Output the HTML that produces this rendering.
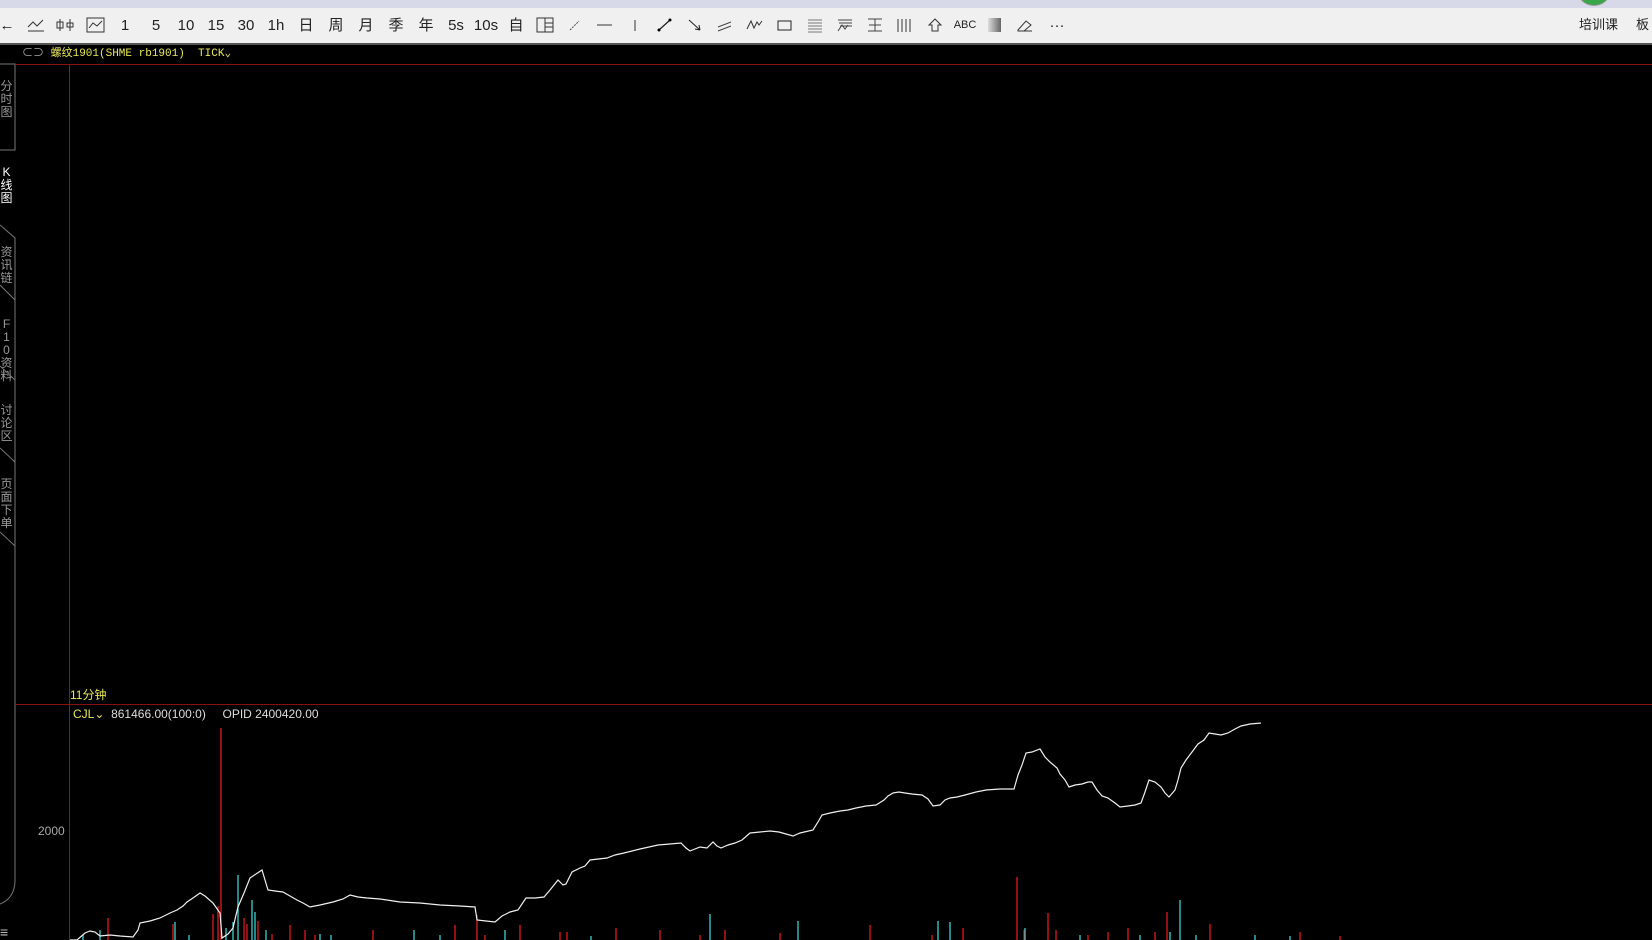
<!DOCTYPE html>
<html><head><meta charset="utf-8"><style>
html,body{margin:0;padding:0;width:1652px;height:940px;overflow:hidden;background:#000;font-family:"Liberation Sans","Noto Sans CJK SC",sans-serif;}
#title{position:absolute;left:0;top:0;width:1652px;height:8px;background:#d7d8e8;overflow:hidden}
#tb{position:absolute;left:0;top:8px;width:1652px;height:35px;background:#f0f0f0;border-bottom:2px solid #555;}
.ti{position:absolute;top:0;height:35px;line-height:35px;font-size:15px;color:#222;text-align:center;width:26px;margin-left:-13px;font-family:"Liberation Sans","Noto Sans CJK SC",sans-serif}
.ti svg{position:absolute;left:3px;top:9px}
.side{position:absolute;left:0;width:13px;font-size:12px;line-height:13px;color:#9a9a9a;text-align:center;font-family:"Liberation Sans","Noto Sans CJK SC",sans-serif}
</style></head><body>
<div id="title"><div style="position:absolute;left:1578px;top:-22px;width:30px;height:26px;border-radius:50%;background:#3aa64a;border:1px solid #999"></div></div>
<div id="tb">
<div class="ti" style="left:7px">←</div>
<div class="ti" style="left:36px"><svg width="20" height="16"><path d="M2 10 L7 5 L11 9 L17 3 M2 14 H18" stroke="#333" fill="none"/></svg></div>
<div class="ti" style="left:66px"><svg width="20" height="16"><path d="M4 2V14M1 5H7V11H1Z M14 2V14M11 6H17V10H11Z" stroke="#333" fill="none"/></svg></div>
<div class="ti" style="left:96px"><svg width="20" height="16"><rect x="1" y="1" width="17" height="14" stroke="#333" fill="none"/><path d="M3 11 L7 6 L11 9 L16 4" stroke="#333" fill="none"/></svg></div>
<div class="ti" style="left:125px">1</div>
<div class="ti" style="left:156px">5</div>
<div class="ti" style="left:186px">10</div>
<div class="ti" style="left:216px">15</div>
<div class="ti" style="left:246px">30</div>
<div class="ti" style="left:276px">1h</div>
<div class="ti" style="left:306px">日</div>
<div class="ti" style="left:336px">周</div>
<div class="ti" style="left:366px">月</div>
<div class="ti" style="left:396px">季</div>
<div class="ti" style="left:426px">年</div>
<div class="ti" style="left:456px">5s</div>
<div class="ti" style="left:486px">10s</div>
<div class="ti" style="left:516px">自</div>
<div class="ti" style="left:546px"><svg width="20" height="16"><rect x="1" y="1" width="16" height="14" stroke="#333" fill="none"/><path d="M9 1V15M9 6H17M9 10H17" stroke="#333"/></svg></div>
<div class="ti" style="left:575px"><svg width="20" height="16"><path d="M5 13L14 4" stroke="#555" stroke-dasharray="2 1"/></svg></div>
<div class="ti" style="left:605px"><svg width="20" height="16"><path d="M2 8H17" stroke="#333"/></svg></div>
<div class="ti" style="left:635px"><svg width="20" height="16"><path d="M10 3V14" stroke="#333"/></svg></div>
<div class="ti" style="left:665px"><svg width="20" height="16"><path d="M4 13L15 3" stroke="#222" stroke-width="1.3"/><circle cx="4" cy="13" r="1.5"/><circle cx="15" cy="3" r="1.5"/></svg></div>
<div class="ti" style="left:695px"><svg width="20" height="16"><path d="M4 3L15 13M15 13L10 12M15 13L14 8" stroke="#222" fill="none"/></svg></div>
<div class="ti" style="left:725px"><svg width="20" height="16"><path d="M3 10L16 5M3 14L16 9" stroke="#444"/></svg></div>
<div class="ti" style="left:755px"><svg width="20" height="16"><path d="M2 12L6 4L9 11L12 5L14 8L17 4" stroke="#333" fill="none"/></svg></div>
<div class="ti" style="left:785px"><svg width="20" height="16"><rect x="3" y="4" width="13" height="9" stroke="#222" fill="none"/></svg></div>
<div class="ti" style="left:815px"><svg width="20" height="16"><path d="M3 3H17M3 6H17M3 9H17M3 12H17M3 15H17" stroke="#777"/></svg></div>
<div class="ti" style="left:845px"><svg width="20" height="16"><path d="M3 3H17M4 6H17M5 9H17M3 14L7 8L10 12L13 8" stroke="#444" fill="none"/></svg></div>
<div class="ti" style="left:875px"><svg width="20" height="16"><path d="M3 2H17M3 14H17M10 2V14M4 8H16" stroke="#444"/></svg></div>
<div class="ti" style="left:905px"><svg width="20" height="16"><path d="M3 2V15M7 2V15M11 2V15M15 2V15" stroke="#333"/></svg></div>
<div class="ti" style="left:935px"><svg width="20" height="16"><path d="M10 2L4 8H7V14H13V8H16Z" stroke="#333" fill="none"/></svg></div>
<div class="ti" style="left:965px;font-size:11px">ABC</div>
<div class="ti" style="left:995px"><svg width="20" height="16"><defs><linearGradient id="g"><stop offset="0" stop-color="#ddd"/><stop offset="1" stop-color="#666"/></linearGradient></defs><rect x="3" y="1" width="13" height="14" fill="url(#g)"/></svg></div>
<div class="ti" style="left:1025px"><svg width="20" height="16"><path d="M3 13L11 4L16 8L9 14H3Z M3 14H17" stroke="#333" fill="none"/></svg></div>
<div class="ti" style="left:1057px">···</div>
<div style="position:absolute;left:1579px;top:0;line-height:33px;font-size:13px;color:#222">培训课</div>
<div style="position:absolute;left:1636px;top:0;line-height:33px;font-size:13px;color:#222">板</div>
</div>

<div style="position:absolute;left:22px;top:46px;font-family:'Liberation Mono','Noto Sans CJK SC',monospace;font-size:11px;color:#e8e85a;white-space:pre;line-height:16px"><span style="color:#aaa">⊂⊃</span> 螺纹1901(SHME rb1901)  TICK<span>⌄</span></div>
<div style="position:absolute;left:70px;top:686px;font-size:12px;color:#e8e85a">11分钟</div>
<div style="position:absolute;left:73px;top:707px;font-size:12px;color:#ddd;white-space:pre"><span style="color:#e8e85a">CJL⌄</span>  861466.00(100:0)     OPID 2400420.00</div>
<div style="position:absolute;left:38px;top:824px;font-size:12px;color:#aaa">2000</div>

<div class="side" style="top:80px">分<br>时<br>图</div>
<div class="side" style="top:166px;color:#fff">K<br>线<br>图</div>
<div class="side" style="top:246px">资<br>讯<br>链</div>
<div class="side" style="top:318px">F<br>1<br>0<br>资<br>料</div>
<div class="side" style="top:404px">讨<br>论<br>区</div>
<div class="side" style="top:478px">页<br>面<br>下<br>单</div>
<div style="position:absolute;left:0;top:924px;font-size:14px;color:#bbb">≡</div>

<svg width="1652" height="940" style="position:absolute;left:0;top:0" xmlns="http://www.w3.org/2000/svg">
<g stroke="#777" fill="none" stroke-width="1">
<path d="M0 64H15V150H0"/>
<path d="M0 225L15 238V300L0 285"/>
<path d="M15 300V380L0 366"/>
<path d="M15 380V462L0 448"/>
<path d="M15 462V546L0 532"/>
<path d="M15 546V880Q15 898 0 904"/>
</g>
<path d="M16 64.5H1652M16 704.5H1652" stroke="#8a1010"/>
<path d="M69.5 64V940" stroke="#9a1515"/>
<g stroke="#e01818" stroke-width="1.3">
<path d="M221 728V940M108 918V940M173 924V940M213 914V940M218 906V940M244 918V940M247 924V940M258 921V940M272 934V940M290 925V940M305 930V940M315 935V940M373 930V940M455 925V940M477 915V940M485 935V940M520 925V940M560 932V940M567 932V940M616 928V940M660 930V940M700 935V940M725 930V940M780 933V940M870 925V940M932 935V940M963 928V940M1017 877V940M1024 930V940M1048 913V940M1056 930V940M1088 935V940M1108 932V940M1128 928V940M1155 932V940M1167 912V940M1210 924V940M1300 932V940M1340 936V940"/>
</g>
<g stroke="#3cd0d0" stroke-width="1.3">
<path d="M238 875V940M226 928V940M233 922V940M252 900V940M83 935V940M100 930V940M175 922V940M189 935V940M255 912V940M266 930V940M320 934V940M331 935V940M414 930V940M440 935V940M505 930V940M591 936V940M710 914V940M798 921V940M938 921V940M950 922V940M1025 928V940M1080 935V940M1140 935V940M1180 900V940M1170 932V940M1196 935V940M1255 935V940M1290 936V940"/>
</g>
<polyline fill="none" stroke="#f0f0f0" stroke-width="1.2" points="70,940 77,940 85,933 90,931 95,932 100,936 110,935 120,936 133,937 138,930 140,923 150,921 160,918 170,913 177,910 183,906 187,902 193,898 200,893 205,896 213,903 220,913 222,938 228,934 233,928 236,915 238,907 244,893 250,878 256,874 262,870 265,880 268,890 275,891 283,892 290,896 297,900 303,903 310,907 320,905 333,902 343,899 350,895 358,897 367,898 380,899 400,902 420,903 440,905 460,906 475,907 477,920 486,921 495,922 502,916 510,912 518,910 526,898 535,898 544,897 550,890 558,880 563,885 566,884 572,872 580,868 585,866 590,860 607,858 615,855 624,853 640,849 658,845 670,844 681,843 686,848 690,851 700,847 707,848 713,842 717,846 721,848 728,845 735,843 742,840 750,833 760,832 770,831 779,832 786,834 793,836 800,833 813,830 818,822 822,815 830,813 840,811 848,810 856,808 866,806 876,805 884,800 888,796 893,793 899,792 905,793 912,794 922,795 928,799 933,806 940,805 945,800 950,798 957,797 965,795 976,792 986,790 1000,789 1014,789 1018,775 1022,765 1026,753 1032,752 1040,749 1045,757 1050,762 1057,768 1060,774 1065,780 1069,787 1075,785 1082,784 1088,782 1092,782 1097,790 1102,796 1108,798 1115,803 1120,807 1128,806 1135,805 1141,803 1145,792 1149,780 1155,782 1161,787 1165,793 1169,797 1175,790 1178,780 1181,768 1186,760 1192,752 1198,744 1204,740 1209,733 1215,734 1221,735 1228,733 1235,729 1241,726 1250,724 1261,723"/>
</svg>
</body></html>
